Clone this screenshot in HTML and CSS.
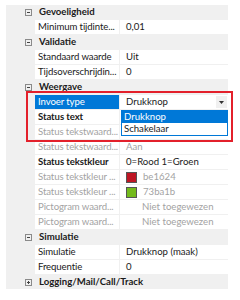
FILE: index.html
```html
<!DOCTYPE html>
<html>
<head>
<meta charset="utf-8">
<link rel="stylesheet" href="styles.css">
</head>
<body>
<div class="wrap">
  <div class="grid">
    <div class="row cat"><span class="gut"><svg class="tog" width="7" height="7" viewBox="0 0 7 7"><rect x="0.5" y="0.5" width="6" height="6" fill="none" stroke="#8a8a8a"/><path d="M2 3.5H5" stroke="#444"/></svg></span><span class="ct">Gevoeligheid</span></div>
    <div class="row"><span class="gut"></span><span class="nm">Minimum tijdinte...</span><span class="vl">0,01</span></div>
    <div class="row cat"><span class="gut"><svg class="tog" width="7" height="7" viewBox="0 0 7 7"><rect x="0.5" y="0.5" width="6" height="6" fill="none" stroke="#8a8a8a"/><path d="M2 3.5H5" stroke="#444"/></svg></span><span class="ct">Validatie</span></div>
    <div class="row"><span class="gut"></span><span class="nm">Standaard waarde</span><span class="vl">Uit</span></div>
    <div class="row"><span class="gut"></span><span class="nm">Tijdsoverschrijdin...</span><span class="vl">0</span></div>
    <div class="row cat"><span class="gut"><svg class="tog" width="7" height="7" viewBox="0 0 7 7"><rect x="0.5" y="0.5" width="6" height="6" fill="none" stroke="#8a8a8a"/><path d="M2 3.5H5" stroke="#444"/></svg></span><span class="ct">Weergave</span></div>
    <div class="row"><span class="gut"></span><span class="nm sel">Invoer type</span><span class="vl combo">Drukknop<span class="btn"><svg width="5" height="3" viewBox="0 0 5 3"><path d="M0 0H5L2.5 3Z" fill="#333"/></svg></span></span></div>
    <div class="row"><span class="gut"></span><span class="nm b">Status text</span><span class="vl"></span></div>
    <div class="row dis"><span class="gut"></span><span class="nm">Status tekstwaard...</span><span class="vl"></span></div>
    <div class="row dis"><span class="gut"></span><span class="nm">Status tekstwaard...</span><span class="vl">Aan</span></div>
    <div class="row"><span class="gut"></span><span class="nm b">Status tekstkleur</span><span class="vl">0=Rood 1=Groen</span></div>
    <div class="row dis"><span class="gut"></span><span class="nm">Status tekstkleur ...</span><span class="vl"><span class="sw red"></span>be1624</span></div>
    <div class="row dis"><span class="gut"></span><span class="nm">Status tekstkleur ...</span><span class="vl"><span class="sw green"></span>73ba1b</span></div>
    <div class="row dis"><span class="gut"></span><span class="nm">Pictogram waard...</span><span class="vl ind">Niet toegewezen</span></div>
    <div class="row dis"><span class="gut"></span><span class="nm">Pictogram waard...</span><span class="vl ind">Niet toegewezen</span></div>
    <div class="row cat"><span class="gut"><svg class="tog" width="7" height="7" viewBox="0 0 7 7"><rect x="0.5" y="0.5" width="6" height="6" fill="none" stroke="#8a8a8a"/><path d="M2 3.5H5" stroke="#444"/></svg></span><span class="ct">Simulatie</span></div>
    <div class="row"><span class="gut"></span><span class="nm">Simulatie</span><span class="vl">Drukknop (maak)</span></div>
    <div class="row"><span class="gut"></span><span class="nm">Frequentie</span><span class="vl">0</span></div>
    <div class="row cat"><span class="gut"><svg class="tog" width="7" height="7" viewBox="0 0 7 7"><rect x="0.5" y="0.5" width="6" height="6" fill="none" stroke="#8a8a8a"/><path d="M2 3.5H5M3.5 2V5" stroke="#444"/></svg></span><span class="ct">Logging/Mail/Call/Track</span></div>
  </div>
  <div class="list">
    <div class="opt on">Drukknop</div>
    <div class="opt">Schakelaar</div>
  </div>
  <div class="mark"></div>
</div>
</body>
</html>
```
FILE: styles.css
```css
html, body {
  margin: 0;
  padding: 0;
  background: #fff;
}
body {
  padding: 5px 0 0 6px;
  font-family: Lato, "Open Sans", sans-serif;
  font-size: 9.6px;
  color: #1a1a1a;
}
.wrap {
  position: relative;
  width: 222px;
}
.grid {
  background: #f0f0f0;
  display: flex;
  flex-direction: column;
  gap: 1px;
}
.row {
  display: flex;
  height: 14px;
  line-height: 14px;
  white-space: nowrap;
}
.gut {
  width: 29px;
  flex: none;
  display: flex;
  align-items: center;
  justify-content: flex-end;
}
.tog {
  margin-right: 3px;
}
.ct {
  padding-left: 4px;
  font-weight: bold;
}
.nm {
  width: 84px;
  flex: none;
  background: #fff;
  padding-left: 3px;
  box-sizing: border-box;
  margin-right: 1px;
  letter-spacing: -0.1px;
}
.nm.b {
  font-weight: bold;
}
.nm.sel {
  background: #0078d7;
  color: #fff;
}
.vl {
  width: 108px;
  flex: none;
  background: #fff;
  padding-left: 6px;
  box-sizing: border-box;
  display: flex;
  align-items: center;
}
.vl.ind {
  padding-left: 22px;
}
.dis .nm, .dis .vl {
  color: #a3a3a3;
}
.combo {
  position: relative;
}
.btn {
  position: absolute;
  right: 1px;
  top: 1px;
  width: 11px;
  height: 12px;
  background: #f0f0f0;
  display: flex;
  align-items: center;
  justify-content: center;
}
.sw {
  width: 9px;
  height: 9px;
  border: 1px solid #555;
  margin-right: 6px;
  flex: none;
}
.sw.red { background: #be1624; }
.sw.green { background: #73ba1b; }
.list {
  position: absolute;
  left: 115px;
  top: 105px;
  width: 107px;
  box-sizing: border-box;
  border: 1px solid #0078d7;
  background: #fff;
}
.opt {
  height: 12px;
  line-height: 12px;
  padding-left: 2px;
  color: #1a1a1a;
}
.opt.on {
  background: #0078d7;
  color: #fff;
}
.mark {
  position: absolute;
  left: 20px;
  top: 86px;
  width: 207px;
  height: 51px;
  box-sizing: border-box;
  border: 2px solid #e3202b;
}
```
